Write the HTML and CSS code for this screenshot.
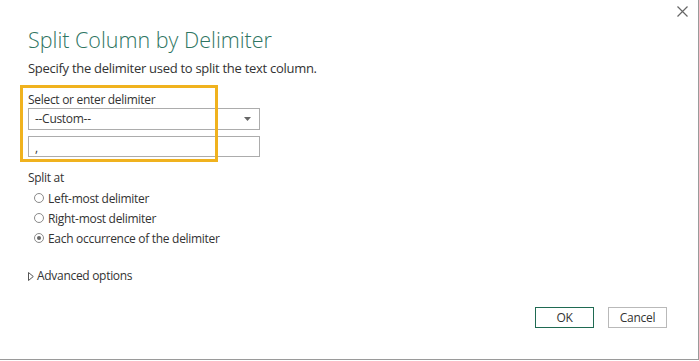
FILE: index.html
```html
<!DOCTYPE html>
<html>
<head>
<meta charset="utf-8">
<link rel="stylesheet" href="styles.css">
</head>
<body>
<div class="dialog">
  <div class="close" aria-label="Close">
    <svg width="11" height="11" viewBox="0 0 11 11"><path d="M0.5 0.5 L10.5 10.5 M10.5 0.5 L0.5 10.5" stroke="#666" stroke-width="1.2" fill="none"/></svg>
  </div>
  <h1 class="title">Split Column by Delimiter</h1>
  <p class="subtitle">Specify the delimiter used to split the text column.</p>
  <div class="highlight-area">
    <div class="highlight"></div>
    <div class="label">Select or enter delimiter</div>
    <div class="select">
      <span>--Custom--</span>
      <svg class="caret" width="7" height="4" viewBox="0 0 7 4"><path d="M0 0 H7 L3.5 4 Z" fill="#666"/></svg>
    </div>
    <div class="input">,</div>
  </div>
  <div class="split-label">Split at</div>
  <div class="radios">
    <div class="radio-row"><span class="radio"></span><span>Left-most delimiter</span></div>
    <div class="radio-row"><span class="radio"></span><span>Right-most delimiter</span></div>
    <div class="radio-row"><span class="radio checked"></span><span>Each occurrence of the delimiter</span></div>
  </div>
  <div class="advanced">
    <svg width="6" height="9" viewBox="0 0 6 9"><path d="M0.5 0.5 L5.3 4.5 L0.5 8.5 Z" fill="none" stroke="#555" stroke-width="1"/></svg>
    <span>Advanced options</span>
  </div>
  <div class="buttons">
    <div class="btn ok">OK</div>
    <div class="btn cancel">Cancel</div>
  </div>
</div>
</body>
</html>
```
FILE: styles.css
```css
html, body {
  margin: 0;
  padding: 0;
  background: #fff;
}
body {
  font-family: "Open Sans", "Noto Sans", sans-serif;
  color: #333;
}
.dialog {
  position: relative;
  box-sizing: border-box;
  width: 699px;
  height: 360px;
  border-right: 1px solid #9a9a9a;
  border-bottom: 1px solid #9a9a9a;
  padding: 25px 0 0 28px;
}
.close {
  position: absolute;
  top: 6px;
  left: 677px;
  width: 11px;
  height: 11px;
}
.close svg { display: block; }
.title {
  margin: 0;
  font-weight: 300;
  font-size: 21.5px;
  line-height: 29px;
  color: #2f7562;
}
.subtitle {
  margin: 5px 0 0 0;
  font-size: 13px;
  line-height: 18px;
  letter-spacing: -0.28px;
  color: #333;
}
.highlight-area {
  position: relative;
  margin-top: 11px;
  width: 232px;
  padding-top: 4px;
}
.highlight {
  position: absolute;
  left: -8px;
  top: -3px;
  width: 192px;
  height: 71px;
  border: 3px solid #f0b21e;
  pointer-events: none;
}
.label, .select, .input, .split-label, .radio-row, .advanced, .btn {
  letter-spacing: -0.3px;
}
.label {
  font-size: 12px;
  line-height: 16px;
  color: #333;
}
.select, .input {
  box-sizing: border-box;
  width: 232px;
  height: 22px;
  border: 1px solid #acacac;
  font-size: 12px;
  line-height: 20px;
  padding-left: 6px;
  color: #333;
}
.select {
  display: flex;
  align-items: center;
  justify-content: space-between;
  padding-right: 8px;
}
.caret { display: block; }
.input {
  margin-top: 6px;
  height: 21px;
  line-height: 22px;
}
.split-label {
  margin-top: 13px;
  font-size: 12px;
  line-height: 16px;
}
.radios {
  margin-top: 2px;
  padding-left: 6px;
  display: flex;
  flex-direction: column;
}
.radio-row {
  display: flex;
  align-items: center;
  height: 20px;
  font-size: 12px;
  gap: 4px;
}
.radio {
  box-sizing: border-box;
  width: 10px;
  height: 10px;
  border: 1px solid #8a8a8a;
  border-radius: 50%;
  position: relative;
}
.radio.checked::after {
  content: "";
  position: absolute;
  left: 2px;
  top: 2px;
  width: 4px;
  height: 4px;
  border-radius: 50%;
  background: #666;
}
.advanced {
  margin-top: 20px;
  display: flex;
  align-items: center;
  gap: 3px;
  font-size: 12px;
  line-height: 16px;
}
.advanced svg { display: block; }
.buttons {
  margin-top: 23px;
  display: flex;
  justify-content: flex-end;
  gap: 14px;
  padding-right: 31px;
}
.btn {
  box-sizing: border-box;
  width: 59px;
  height: 21px;
  font-size: 12px;
  line-height: 19px;
  text-align: center;
  color: #333;
}
.ok { border: 1px solid #1f6a52; }
.cancel { border: 1px solid #b9b9b9; }
```
